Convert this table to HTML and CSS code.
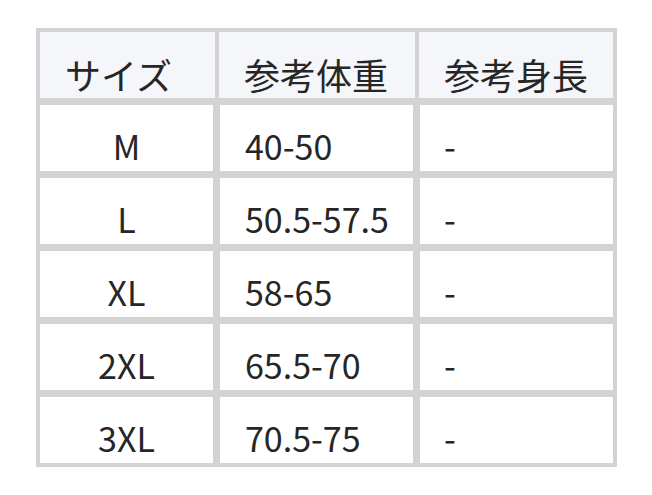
FILE: index.html
```html
<!DOCTYPE html>
<html lang="ja">
<head>
<meta charset="utf-8">
<title>サイズ表</title>
<link rel="stylesheet" href="styles.css">
</head>
<body>
<div class="wrap">
  <div class="size-table">
    <div class="row head">
      <div class="cell c1">サイズ</div>
      <div class="cell c2">参考体重</div>
      <div class="cell c3">参考身長</div>
    </div>
    <div class="row body">
      <div class="cell c1">M</div>
      <div class="cell c2">40-50</div>
      <div class="cell c3">-</div>
    </div>
    <div class="row body">
      <div class="cell c1">L</div>
      <div class="cell c2">50.5-57.5</div>
      <div class="cell c3">-</div>
    </div>
    <div class="row body">
      <div class="cell c1">XL</div>
      <div class="cell c2">58-65</div>
      <div class="cell c3">-</div>
    </div>
    <div class="row body">
      <div class="cell c1">2XL</div>
      <div class="cell c2">65.5-70</div>
      <div class="cell c3">-</div>
    </div>
    <div class="row body last">
      <div class="cell c1">3XL</div>
      <div class="cell c2">70.5-75</div>
      <div class="cell c3">-</div>
    </div>
  </div>
</div>
</body>
</html>
```

FILE: styles.css
```css
html, body {
  margin: 0;
  padding: 0;
  background: #ffffff;
}

.wrap {
  padding: 28px 0 0 36px;
}

.size-table {
  width: 581px;
  box-sizing: border-box;
  border: 4px solid #d3d3d3;
  background: #d3d3d3;
  font-family: "Noto Sans CJK JP", "Noto Sans", sans-serif;
  font-size: 34px;
  line-height: 40px;
  color: #262626;
}

.row {
  display: flex;
}

.cell {
  box-sizing: border-box;
  height: 66px;
  padding: 21px 0 0 24px;
  white-space: nowrap;
}

.head {
  background: #d3d3d3;
  border-bottom: 7px solid #d3d3d3;
}

.head .cell {
  background: #f5f6fa;
  font-size: 36px;
  padding-top: 22px;
  padding-left: 25px;
}

.head .c1 { width: 175px; margin-right: 4px; }
.head .c2 { width: 196px; margin-right: 4px; }
.head .c3 { width: 194px; }

.body {
  border-bottom: 7px solid #d3d3d3;
}

.body.last {
  border-bottom: 0;
}

.body .cell {
  background: #ffffff;
}

.body .c1 { width: 173px; margin-right: 7px; padding-left: 0; text-align: center; }
.body .c2 { width: 193px; margin-right: 7px; padding-left: 25px; }
.body .c3 { width: 193px; padding-left: 24px; }
```
